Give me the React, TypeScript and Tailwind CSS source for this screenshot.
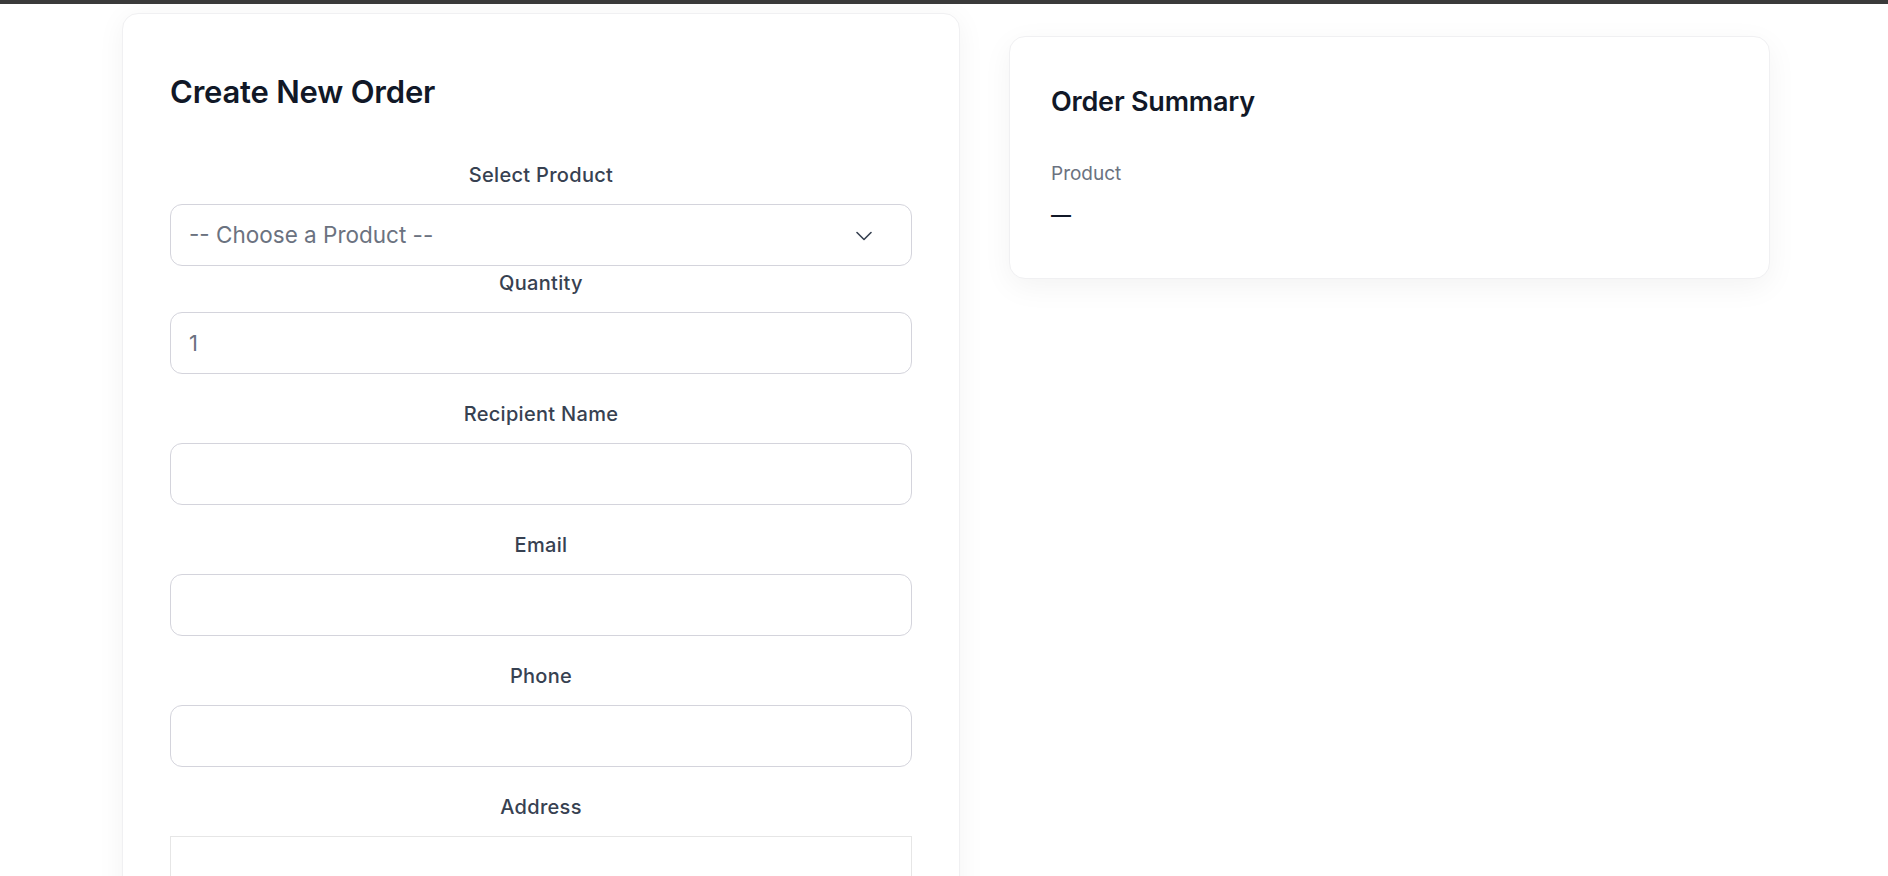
import React from 'react'

const fields = [
  { label: 'Recipient Name', type: 'text' },
  { label: 'Email', type: 'email' },
  { label: 'Phone', type: 'tel' },
]

const font = { fontFamily: 'Inter, "Open Sans", sans-serif' }

const Field = ({ label, type }: { label: string; type: string }) => (
  <div className="mb-[26px]">
    <label className="mb-[15px] block text-center text-[20px] font-medium leading-7 tracking-[0.3px] text-[#374151]">{label}</label>
    <input
      type={type}
      className="h-[62px] w-full rounded-xl border border-[#d4d4dc] bg-white px-[18px] text-[22px] text-[#6b7280] outline-none"
    />
  </div>
)

const App = () => {
  return (
    <div className="h-[876px] overflow-hidden border-t-4 border-[#3a3a3a] bg-white" style={font}>
      <div className="flex items-start gap-[49px] pl-[122px]">
        {/* order form */}
        <div className="mt-[9px] w-[838px] shrink-0 rounded-2xl border border-[#f0f0f2] bg-white px-[47px] pt-[60px] shadow-[0_4px_28px_rgba(0,0,0,0.05)]">
          <h1 className="mb-[51px] text-[31px] font-semibold leading-9 tracking-[-0.2px] text-[#111827]">Create New Order</h1>

          <label className="mb-[15px] block text-center text-[20px] font-medium leading-7 tracking-[0.3px] text-[#374151]">Select Product</label>
          <div className="relative">
            <select
              defaultValue=""
              className="h-[62px] w-full appearance-none rounded-xl border border-[#d4d4dc] bg-white px-[18px] text-[22.5px] text-[#6b7280] outline-none"
            >
              <option value="">-- Choose a Product --</option>
            </select>
            <svg
              className="pointer-events-none absolute right-[40px] top-[27px]"
              width="16"
              height="10"
              viewBox="0 0 16 10"
              fill="none"
              stroke="#374151"
              strokeWidth="1.6"
              strokeLinecap="round"
              strokeLinejoin="round"
            >
              <path d="M1 1.5 8 8.5 15 1.5" />
            </svg>
          </div>

          <div className="mt-[3px] mb-[26px]">
            <label className="mb-[15px] block text-center text-[20px] font-medium leading-7 tracking-[0.3px] text-[#374151]">Quantity</label>
            <input
              type="number"
              defaultValue={1}
              className="h-[62px] w-full rounded-xl border border-[#d4d4dc] bg-white px-[18px] text-[22px] text-[#6b7280] outline-none"
            />
          </div>

          {fields.map((f) => (
            <Field key={f.label} label={f.label} type={f.type} />
          ))}

          <label className="mb-[15px] block text-center text-[20px] font-medium leading-7 tracking-[0.3px] text-[#374151]">Address</label>
          <textarea className="block h-[120px] w-full resize-none rounded-none border border-[#e6e6e6] bg-white outline-none" />
        </div>

        {/* summary */}
        <div className="mt-[32px] w-[761px] shrink-0 rounded-2xl border border-[#f0f0f2] bg-white px-[41px] pt-[49px] pb-[48px] shadow-[0_8px_30px_rgba(0,0,0,0.05)]">
          <h2 className="text-[27px] font-semibold leading-8 tracking-[-0.2px] text-[#111827]">Order Summary</h2>
          <div className="mt-[44px] text-[19px] leading-6 text-[#6b7280]">Product</div>
          <div className="mt-[14px] text-[20px] font-semibold leading-[30px] text-[#111827]">—</div>
        </div>
      </div>
    </div>
  )
}

export default App
